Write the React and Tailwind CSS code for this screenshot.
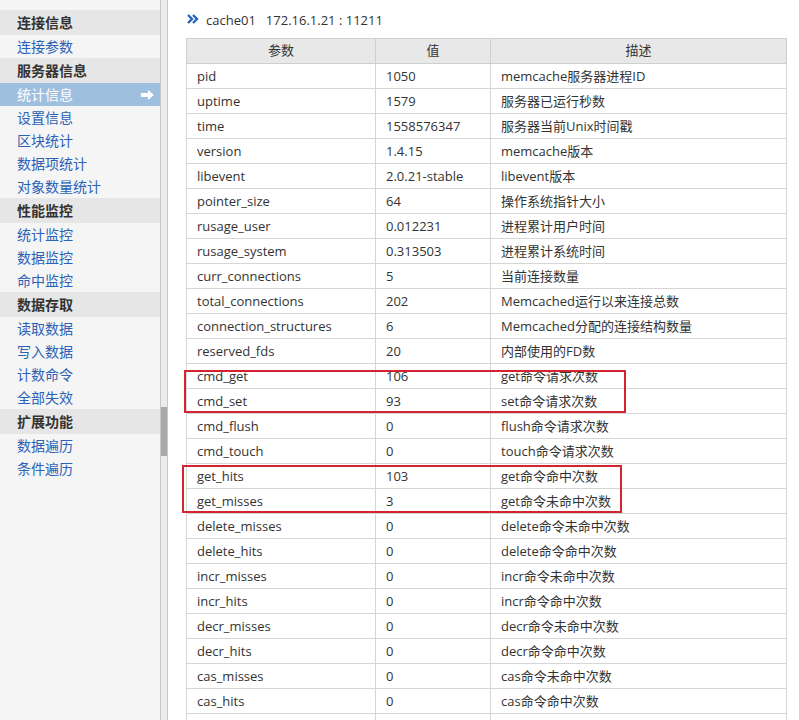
import React from "react";

const menu = [
  { t: "连接信息", h: true },
  { t: "连接参数" },
  { t: "服务器信息", h: true },
  { t: "统计信息", active: true },
  { t: "设置信息" },
  { t: "区块统计" },
  { t: "数据项统计" },
  { t: "对象数量统计" },
  { t: "性能监控", h: true },
  { t: "统计监控" },
  { t: "数据监控" },
  { t: "命中监控" },
  { t: "数据存取", h: true },
  { t: "读取数据" },
  { t: "写入数据" },
  { t: "计数命令" },
  { t: "全部失效" },
  { t: "扩展功能", h: true },
  { t: "数据遍历" },
  { t: "条件遍历" },
];

const rows = [
  ["pid", "1050", "memcache服务器进程ID"],
  ["uptime", "1579", "服务器已运行秒数"],
  ["time", "1558576347", "服务器当前Unix时间戳"],
  ["version", "1.4.15", "memcache版本"],
  ["libevent", "2.0.21-stable", "libevent版本"],
  ["pointer_size", "64", "操作系统指针大小"],
  ["rusage_user", "0.012231", "进程累计用户时间"],
  ["rusage_system", "0.313503", "进程累计系统时间"],
  ["curr_connections", "5", "当前连接数量"],
  ["total_connections", "202", "Memcached运行以来连接总数"],
  ["connection_structures", "6", "Memcached分配的连接结构数量"],
  ["reserved_fds", "20", "内部使用的FD数"],
  ["cmd_get", "106", "get命令请求次数"],
  ["cmd_set", "93", "set命令请求次数"],
  ["cmd_flush", "0", "flush命令请求次数"],
  ["cmd_touch", "0", "touch命令请求次数"],
  ["get_hits", "103", "get命令命中次数"],
  ["get_misses", "3", "get命令未命中次数"],
  ["delete_misses", "0", "delete命令未命中次数"],
  ["delete_hits", "0", "delete命令命中次数"],
  ["incr_misses", "0", "incr命令未命中次数"],
  ["incr_hits", "0", "incr命令命中次数"],
  ["decr_misses", "0", "decr命令未命中次数"],
  ["decr_hits", "0", "decr命令命中次数"],
  ["cas_misses", "0", "cas命令未命中次数"],
  ["cas_hits", "0", "cas命令命中次数"],
  ["", "", ""],
];

const font = { fontFamily: '"Open Sans", "Noto Sans CJK SC", sans-serif' };

export default function App() {
  return (
    <div className="flex h-[720px] w-[799px] overflow-hidden bg-white text-[#333]" style={font}>
      <div className="w-[160px] shrink-0 bg-[#f5f5f5] pt-[10px]">
        {menu.map((m, i) =>
          m.h ? (
            <div key={i} className="flex h-[25px] items-center bg-[#e6e6e6] pl-[17px] text-[14px] font-bold text-[#333]">
              {m.t}
            </div>
          ) : m.active ? (
            <div key={i} className="flex h-[23px] items-center justify-between bg-[#9fbfdf] pl-[17px] pr-[5px] text-[14px] text-white">
              <span>{m.t}</span>
              <svg width="14" height="10" viewBox="0 0 14 10">
                <path d="M0 3 H7 V0 L13 5 L7 10 V7 H0 Z" fill="#ffffff" />
              </svg>
            </div>
          ) : (
            <div key={i} className="flex h-[23px] items-center pl-[17px] text-[14px] text-[#2b62b5]">
              {m.t}
            </div>
          )
        )}
      </div>
      <div className="flex w-[8px] shrink-0 flex-col border-x border-[#c8c8c8] bg-[#ededed]">
        <div className="mt-[407px] h-[49px] bg-[#a9a9a9]" />
      </div>
      <div className="flex-1 pl-[18px]">
        <div className="flex h-[38px] items-center pt-[3px] text-[13px] text-[#333]">
          <svg width="12" height="10" viewBox="0 0 12 10" className="mb-[4px] ml-[1px] mr-[7px]">
            <path d="M1 1 L5 5 L1 9 M6 1 L10 5 L6 9" stroke="#2465b8" strokeWidth="2.4" fill="none" />
          </svg>
          <span>cache01</span>
          <span className="ml-[10px]">172.16.1.21 : 11211</span>
        </div>
        <div className="relative w-[600px]">
          <table className="w-[600px] table-fixed border-collapse text-[13px] text-[#333]">
            <colgroup>
              <col className="w-[189px]" />
              <col className="w-[115px]" />
              <col className="w-[296px]" />
            </colgroup>
            <thead>
              <tr className="h-[25px] bg-[#e8e8e8]">
                <th className="border border-[#cfcfcf] font-normal">参数</th>
                <th className="border border-[#cfcfcf] font-normal">值</th>
                <th className="border border-[#cfcfcf] font-normal">描述</th>
              </tr>
            </thead>
            <tbody>
              {rows.map((r, i) => (
                <tr key={i} className="h-[25px]">
                  <td className="border border-[#d6d6d6] pl-[10px] leading-none">{r[0]}</td>
                  <td className="border border-[#d6d6d6] pl-[10px] leading-none">{r[1]}</td>
                  <td className="border border-[#d6d6d6] pl-[10px] leading-none">{r[2]}</td>
                </tr>
              ))}
            </tbody>
          </table>
          <div className="absolute left-[-2px] top-[332px] h-[43px] w-[442px] border-2 border-[#d3242f]" />
          <div className="absolute left-[-4px] top-[427px] h-[48px] w-[440px] border-2 border-[#d3242f]" />
        </div>
      </div>
    </div>
  );
}
